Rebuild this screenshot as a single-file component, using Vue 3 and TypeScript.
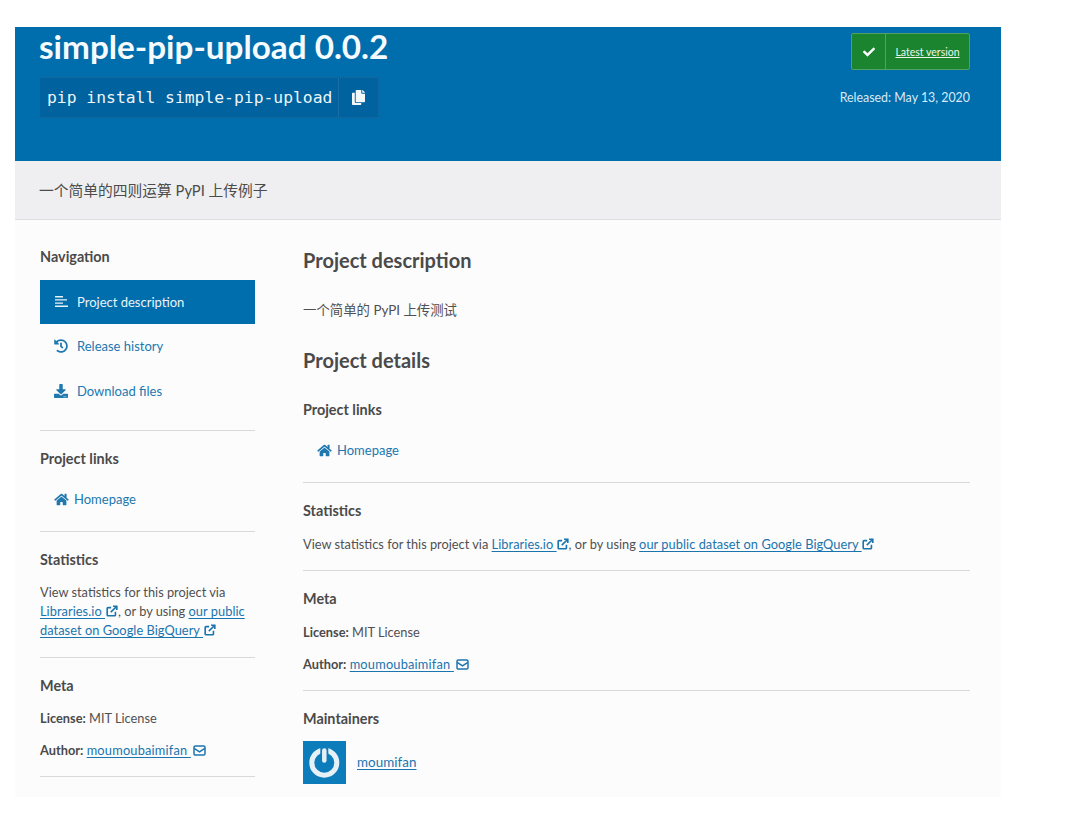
<script setup lang="ts">
const icons: Record<string, string> = {
  check: 'M173.898 439.404l-166.4-166.4c-9.997-9.997-9.997-26.206 0-36.204l36.203-36.204c9.997-9.998 26.207-9.998 36.204 0L192 312.69 432.095 72.596c9.997-9.997 26.207-9.997 36.204 0l36.203 36.204c9.997 9.997 9.997 26.206 0 36.204l-294.4 294.401c-9.998 9.997-26.207 9.997-36.204-.001z',
  home: 'M280.37 148.26L96 300.11V464a16 16 0 0 0 16 16l112.06-.29a16 16 0 0 0 15.92-16V368a16 16 0 0 1 16-16h64a16 16 0 0 1 16 16v95.64a16 16 0 0 0 16 16.05L464 480a16 16 0 0 0 16-16V300L295.67 148.26a12.19 12.19 0 0 0-15.3 0zM571.6 251.47L488 182.56V44.05a12 12 0 0 0-12-12h-56a12 12 0 0 0-12 12v72.61L318.47 43a48 48 0 0 0-61 0L4.34 251.47a12 12 0 0 0-1.6 16.9l25.5 31A12 12 0 0 0 45.15 301l235.22-193.74a12.19 12.19 0 0 1 15.3 0L530.9 301a12 12 0 0 0 16.9-1.6l25.5-31a12 12 0 0 0-1.7-16.93z',
  download: 'M216 0h80c13.3 0 24 10.7 24 24v168h87.7c17.8 0 26.7 21.5 14.1 34.1L269.7 378.3c-7.5 7.5-19.8 7.5-27.3 0L90.1 226.1c-12.6-12.6-3.7-34.1 14.1-34.1H192V24c0-13.3 10.7-24 24-24zm296 376v112c0 13.3-10.7 24-24 24H24c-13.3 0-24-10.7-24-24V376c0-13.3 10.7-24 24-24h146.7l49 49c20.1 20.1 52.5 20.1 72.6 0l49-49H488c13.3 0 24 10.7 24 24zm-124 88c0-11-9-20-20-20s-20 9-20 20 9 20 20 20 20-9 20-20zm64 0c0-11-9-20-20-20s-20 9-20 20 9 20 20 20 20-9 20-20z',
  history: 'M504 255.531c.253 136.64-111.18 248.372-247.82 248.468-59.015.042-113.223-20.53-155.822-54.911-11.077-8.94-11.905-25.541-1.839-35.607l11.267-11.267c8.609-8.609 22.353-9.551 31.891-1.984C173.062 425.135 212.781 440 256 440c101.705 0 184-82.311 184-184 0-101.705-82.311-184-184-184-48.814 0-93.149 18.969-126.068 49.932l50.754 50.754c10.08 10.08 2.941 27.314-11.313 27.314H24c-8.837 0-16-7.163-16-16V38.627c0-14.254 17.234-21.393 27.314-11.314l49.372 49.372C129.209 34.136 189.552 8 256 8c136.81 0 247.747 110.78 248 247.531zm-180.912 78.784l9.823-12.63c8.138-10.463 6.253-25.542-4.21-33.679L288 256.349V152c0-13.255-10.745-24-24-24h-16c-13.255 0-24 10.745-24 24v135.651l65.409 50.874c10.463 8.137 25.541 6.253 33.679-4.21z',
  copy: 'M320 448v40c0 13.255-10.745 24-24 24H24c-13.255 0-24-10.745-24-24V120c0-13.255 10.745-24 24-24h72v296c0 30.879 25.121 56 56 56h168zm0-344V0H152c-13.255 0-24 10.745-24 24v368c0 13.255 10.745 24 24 24h272c13.255 0 24-10.745 24-24V128H344c-13.2 0-24-10.8-24-24zm120.971-31.029L375.029 7.029A24 24 0 0 0 358.059 0H352v96h96v-6.059a24 24 0 0 0-7.029-16.97z',
  ext: 'M11 8v3.6a1 1 0 0 1-1 1H2.4a1 1 0 0 1-1-1V4a1 1 0 0 1 1-1H6M5.6 8.4 12 2M8.2 1.4h4.4v4.4'
}
</script>

<template>
  <div class="frame">
    <header class="banner">
      <div class="banner-left">
        <h1 class="title">simple-pip-upload 0.0.2</h1>
        <div class="pip">
          <span class="pip-cmd">pip install simple-pip-upload</span>
          <span class="pip-copy">
            <svg class="copy-icon" viewBox="0 0 448 512"><path fill="currentColor" :d="icons.copy" /></svg>
          </span>
        </div>
      </div>
      <div class="banner-right">
        <div class="badge">
          <span class="badge-check">
            <svg class="check-icon" viewBox="0 0 512 512"><path fill="currentColor" :d="icons.check" /></svg>
          </span>
          <a class="badge-link">Latest version</a>
        </div>
        <div class="released">Released: May 13, 2020</div>
      </div>
    </header>

    <div class="summary">一个简单的四则运算 PyPI 上传例子</div>

    <div class="content">
      <aside class="side">
        <h3 class="h-nav">Navigation</h3>
        <nav class="nav">
          <a class="nav-item active">
            <svg class="nav-icon" viewBox="0 0 14 14"><path fill="currentColor" d="M1 1h8v1.4H1zM1 4.2h12v1.4H1zM1 7.4h8v1.4H1zM1 10.6h13v1.4H1z" /></svg>
            Project description
          </a>
          <a class="nav-item">
            <svg class="nav-icon" viewBox="0 0 512 512"><path fill="currentColor" :d="icons.history" /></svg>
            Release history
          </a>
          <a class="nav-item">
            <svg class="nav-icon" viewBox="0 0 512 512"><path fill="currentColor" :d="icons.download" /></svg>
            Download files
          </a>
        </nav>
        <hr class="rule r-nav" />
        <h3 class="h-side">Project links</h3>
        <a class="home side-home">
          <svg class="home-icon" viewBox="0 0 576 512"><path fill="currentColor" :d="icons.home" /></svg>
          Homepage
        </a>
        <hr class="rule r-links" />
        <h3 class="h-side">Statistics</h3>
        <p class="side-stats">
          View statistics for this project via
          <a class="link">Libraries.io <svg class="ext" viewBox="0 0 14 14"><path fill="none" stroke="currentColor" stroke-width="1.9" :d="icons.ext" /></svg></a>, or by using
          <a class="link">our public dataset on Google BigQuery <svg class="ext" viewBox="0 0 14 14"><path fill="none" stroke="currentColor" stroke-width="1.9" :d="icons.ext" /></svg></a>
        </p>
        <hr class="rule r-stats" />
        <h3 class="h-side">Meta</h3>
        <p class="meta-line first"><strong>License:</strong> MIT License</p>
        <p class="meta-line"><strong>Author:</strong> <a class="link author">moumoubaimifan <svg class="ext mail" viewBox="0 0 14 12"><rect x="1" y="1" width="12" height="10" rx="1.4" fill="none" stroke="currentColor" stroke-width="1.6" /><path d="M1.2 3.6 7 7.4l5.8-3.8" fill="none" stroke="currentColor" stroke-width="1.6" /></svg></a></p>
        <hr class="rule r-meta" />
      </aside>

      <main class="main">
        <h2 class="h-main first-h">Project description</h2>
        <p class="desc">一个简单的 PyPI 上传测试</p>
        <h2 class="h-main details-h">Project details</h2>
        <h3 class="h-side links-h">Project links</h3>
        <a class="home main-home">
          <svg class="home-icon" viewBox="0 0 576 512"><path fill="currentColor" :d="icons.home" /></svg>
          Homepage
        </a>
        <hr class="rule m-links" />
        <h3 class="h-side">Statistics</h3>
        <p class="main-stats">
          View statistics for this project via
          <a class="link">Libraries.io <svg class="ext" viewBox="0 0 14 14"><path fill="none" stroke="currentColor" stroke-width="1.9" :d="icons.ext" /></svg></a>, or by using
          <a class="link">our public dataset on Google BigQuery <svg class="ext" viewBox="0 0 14 14"><path fill="none" stroke="currentColor" stroke-width="1.9" :d="icons.ext" /></svg></a>
        </p>
        <hr class="rule m-stats" />
        <h3 class="h-side">Meta</h3>
        <p class="meta-line first"><strong>License:</strong> MIT License</p>
        <p class="meta-line"><strong>Author:</strong> <a class="link author">moumoubaimifan <svg class="ext mail" viewBox="0 0 14 12"><rect x="1" y="1" width="12" height="10" rx="1.4" fill="none" stroke="currentColor" stroke-width="1.6" /><path d="M1.2 3.6 7 7.4l5.8-3.8" fill="none" stroke="currentColor" stroke-width="1.6" /></svg></a></p>
        <hr class="rule m-meta" />
        <h3 class="h-side">Maintainers</h3>
        <div class="maint">
          <div class="avatar">
            <svg viewBox="0 0 43 43" width="43" height="43">
              <circle cx="21.3" cy="21.7" r="12.5" fill="none" stroke="#e6f0f7" stroke-width="5" />
              <path d="M21.3 6v13" stroke="#0c7cba" stroke-width="8" />
              <path d="M21.3 9.5v10" stroke="#e6f0f7" stroke-width="4.5" stroke-linecap="round" />
            </svg>
          </div>
          <a class="link maint-link">moumifan</a>
        </div>
      </main>
    </div>
  </div>
</template>

<style>
html, body { background: #ffffff; }
</style>

<style scoped>
.frame {
  width: 986px;
  margin: 27px 0 0 15px;
  font-family: Lato, "Noto Sans CJK SC", sans-serif;
  color: #505050;
  font-size: 13px;
}
h1, h2, h3, p { margin: 0; }
.banner {
  height: 134px;
  box-sizing: border-box;
  background: #006dad;
  padding: 0 31px 0 24px;
  display: flex;
  justify-content: space-between;
  color: #fff;
}
.title {
  font-size: 33.25px;
  line-height: 40px;
  margin-top: -1px;
  font-weight: 700;
  color: #f6fbfe;
  white-space: nowrap;
}
.pip {
  display: inline-flex;
  margin-top: 11px;
  height: 41px;
  box-sizing: border-box;
  background: #00629e;
  border: 1px dotted #1a6ea6;
  align-items: stretch;
}
.pip-cmd {
  font-family: "DejaVu Sans Mono", monospace;
  font-size: 16.35px;
  line-height: 39px;
  padding: 0 6px 0 7px;
  color: #eef6fb;
  white-space: nowrap;
}
.pip-copy {
  width: 39px;
  border-left: 1px solid #1a6da5;
  display: flex;
  align-items: center;
  justify-content: center;
  color: #f2f8fc;
}
.copy-icon { width: 13px; height: 15px; }
.banner-right {
  display: flex;
  flex-direction: column;
  align-items: flex-end;
  padding-top: 6px;
}
.badge {
  display: flex;
  width: 119px;
  height: 37px;
  box-sizing: border-box;
  background: #1a842f;
  border: 1px solid #4fa264;
  border-radius: 2px;
  align-items: stretch;
}
.badge-check {
  width: 33px;
  border-right: 1px solid #4fa264;
  display: flex;
  align-items: center;
  justify-content: center;
  color: #fff;
}
.check-icon { width: 12px; height: 12px; }
.badge-link {
  flex: 1;
  text-align: center;
  font-size: 10.5px;
  line-height: 37px;
  color: #e9f5ea;
  text-decoration: underline;
  white-space: nowrap;
}
.released {
  margin-top: 20px;
  font-size: 12.4px;
  line-height: 16px;
  color: #d8eaf6;
  white-space: nowrap;
}
.summary {
  height: 59px;
  box-sizing: border-box;
  background: #efeff1;
  border-bottom: 1px solid #dedee0;
  padding-left: 24px;
  font-size: 14.75px;
  line-height: 58px;
  color: #4c4c4c;
}
.content {
  display: flex;
  gap: 48px;
  background: #fcfcfd;
  padding: 0 31px 13px 25px;
}
.side { width: 215px; flex: none; }
.main { width: 667px; flex: none; }
.h-nav, .h-side {
  font-size: 14.4px;
  line-height: 20px;
  font-weight: 700;
  color: #4a4a4a;
  white-space: nowrap;
}
.h-nav { margin-top: 27px; }
.nav { margin-top: 13px; }
.nav-item {
  height: 44.5px;
  display: flex;
  align-items: center;
  gap: 9px;
  padding-left: 14px;
  color: #2178af;
  font-size: 13px;
}
.nav-item.active {
  background: #006dad;
  color: #eaf4fa;
  height: 44px;
}
.nav-icon { width: 14px; height: 14px; flex: none; }
.rule {
  border: 0;
  height: 1px;
  margin: 0;
  background: #d9d9dc;
}
.r-nav { margin-top: 17px; margin-bottom: 18px; }
.home {
  display: flex;
  align-items: center;
  gap: 5px;
  color: #2178af;
  font-size: 13px;
  line-height: 20px;
}
.side-home { margin: 20px 0 0 14px; }
.home-icon { width: 15px; height: 13px; flex: none; }
.r-links { margin-top: 22px; margin-bottom: 18px; }
.side-stats {
  margin-top: 13px;
  font-size: 12.8px;
  line-height: 19px;
}
.link {
  color: #1a74ad;
  text-decoration: underline;
  text-underline-offset: 2px;
  letter-spacing: 0.05px;
}
.author { letter-spacing: 0.2px; }
.ext { width: 12px; height: 12px; vertical-align: -1px; margin-left: 1px; }
.main-stats .ext { margin-left: 0; }
.mail { width: 13px; height: 11px; margin-left: 2px; }
.r-stats { margin-top: 17px; margin-bottom: 18px; }
.meta-line { font-size: 12.8px; line-height: 20px; margin-top: 12px; }
.meta-line.first { margin-top: 12px; }
.side .meta-line.first { margin-top: 12px; }
.meta-line strong { font-weight: 700; color: #4a4a4a; }
.r-meta { margin-top: 16px; }
.h-main {
  font-size: 20px;
  line-height: 26px;
  font-weight: 700;
  color: #4a4a4a;
  white-space: nowrap;
}
.first-h { margin-top: 27px; }
.desc { margin-top: 27px; font-size: 13.4px; line-height: 20px; }
.details-h { margin-top: 27px; }
.links-h { margin-top: 27px; }
.main-home { margin: 20px 0 0 14px; }
.m-links { margin-top: 22px; margin-bottom: 18px; }
.main-stats {
  margin-top: 13px;
  font-size: 12.8px;
  line-height: 20px;
  white-space: nowrap;
}
.m-stats { margin-top: 16px; margin-bottom: 18px; }
.main .meta-line.first { margin-top: 13px; }
.m-meta { margin-top: 16px; margin-bottom: 18px; }
.maint {
  display: flex;
  align-items: center;
  gap: 11px;
  margin-top: 12px;
}
.avatar {
  width: 43px;
  height: 43px;
  background: #0c7cba;
}
.avatar svg { display: block; }
.maint-link { font-size: 13.4px; padding-bottom: 2px; }
</style>
